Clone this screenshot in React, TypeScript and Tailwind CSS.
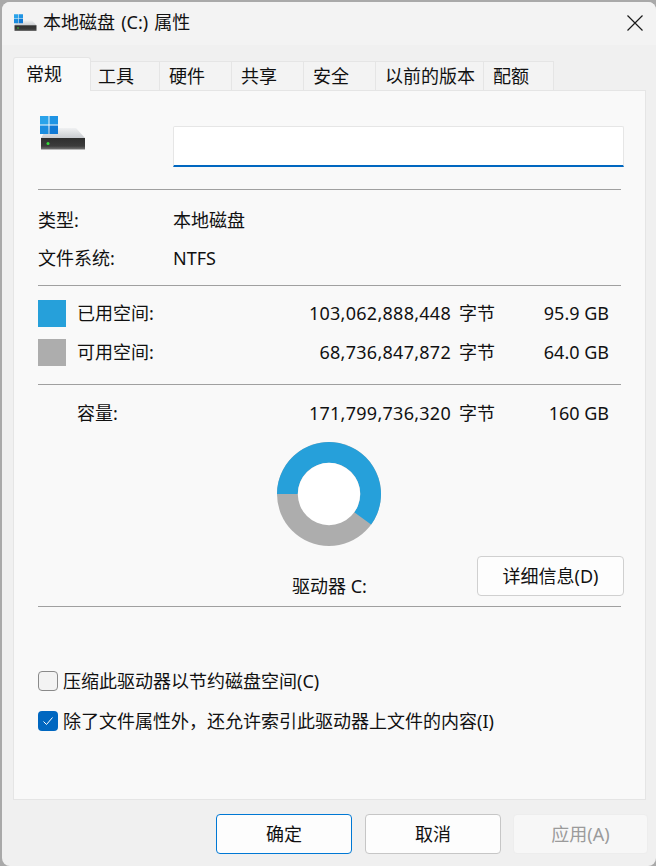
import React from 'react';

const FONT = '"Noto Sans", "Noto Sans CJK SC", sans-serif';

const DriveIcon = ({ className }: { className: string }) => (
  <svg viewBox="0 0 46 35" className={className}>
    <defs>
      <linearGradient id="driveTop" x1="0" y1="0" x2="0" y2="1">
        <stop offset="0" stopColor="#f0f1f2" />
        <stop offset="1" stopColor="#c9ccd0" />
      </linearGradient>
      <linearGradient id="driveFront" x1="0" y1="0" x2="0" y2="1">
        <stop offset="0" stopColor="#2e2e2e" />
        <stop offset="0.7" stopColor="#3c3c3c" />
        <stop offset="1" stopColor="#777777" />
      </linearGradient>
    </defs>
    <path d="M7 12h29l9 10H1z" fill="url(#driveTop)" />
    <path d="M1 22h44v11.500H1z" fill="url(#driveFront)" />
    <circle cx="8" cy="27.500" r="1.500" fill="#35e03a" />
    <rect x="0" y="0" width="8.500" height="8.500" fill="#2aa3ea" />
    <rect x="9.500" y="0" width="8.500" height="8.500" fill="#1f94e4" />
    <rect x="0" y="9.500" width="8.500" height="8.500" fill="#1b8de0" />
    <rect x="9.500" y="9.500" width="8.500" height="8.500" fill="#1078d4" />
  </svg>
);

const tabs = [
  { label: '工具', cls: 'w-[71px] -ml-[2px]' },
  { label: '硬件', cls: 'w-[72px]' },
  { label: '共享', cls: 'w-[72px]' },
  { label: '安全', cls: 'w-[72px]' },
  { label: '以前的版本', cls: 'w-[108px]' },
  { label: '配额', cls: 'w-[70px]' },
];

const Divider = ({ className }: { className: string }) => (
  <div className={`h-px shrink-0 bg-[#a0a0a0] ${className}`} />
);

const SpaceRow = ({ label, bytes, size, swatch }: { label: string; bytes: string; size: string; swatch?: string }) => (
  <div className="flex items-center h-[27px] text-[18px]">
    <div className={`w-[28px] h-[27px] ${swatch ?? ''}`} />
    <div className="ml-[11px] w-[180px]">{label}</div>
    <div className="w-[238px] text-right">
      <span className="tracking-[0.27px]">{bytes}</span>
      <span className="ml-[8px]">字节</span>
    </div>
    <div className="w-[114px] text-right">{size}</div>
  </div>
);

const DialogButton = ({ label, cls }: { label: string; cls: string }) => (
  <button className={`h-[40px] rounded-[4px] border text-[18px] ${cls}`}>{label}</button>
);

export default function App() {
  return (
    <div className="w-[656px] h-[866px] overflow-hidden bg-[#a9a9a9] pt-[2px] pl-[2px] text-[#111]" style={{ fontFamily: FONT }}>
      <div className="w-[654px] h-[864px] rounded-[8px] bg-[#f0f0f0] flex flex-col">
        <div className="h-[43px] rounded-t-[8px] bg-[#f3f3f3] flex items-center pl-[12px] pr-[13px] shrink-0">
          <DriveIcon className="w-[23px] h-[18px] -mt-[2px]" />
          <span className="ml-[6px] text-[18px] -mt-[2px] [word-spacing:1.5px]">本地磁盘 (C:) 属性</span>
          <svg viewBox="0 0 16 16" className="ml-auto -mt-[2px] w-[16px] h-[16px]" fill="none" stroke="#1a1a1a" strokeWidth="1.200">
            <path d="M.5.5l15 15M15.500.5l-15 15" />
          </svg>
        </div>

        <div className="ml-[11px] mt-[12px] flex items-end h-[34px] shrink-0 relative z-10 -mb-px">
          <div className="w-[78px] h-[34px] pl-[12px] pt-[3px] bg-[#f9f9f9] border border-b-0 border-[#e5e5e5] rounded-t-[3px] text-[18px] relative z-10">
            常规
          </div>
          {tabs.map((t) => (
            <div key={t.label} className={`${t.cls} h-[30px] pl-[9px] flex items-center bg-[#f3f3f3] border-t border-r border-b border-[#e5e5e5] text-[18px]`}>
              {t.label}
            </div>
          ))}
        </div>

        <div className="ml-[11px] w-[633px] h-[710px] bg-[#f9f9f9] border border-[#e5e5e5] px-[24px] flex flex-col shrink-0">
          <div className="flex h-[77px] items-start shrink-0">
            <DriveIcon className="ml-[2px] mt-[25px] w-[46px] h-[35px] shrink-0" />
            <div className="ml-[87px] mt-[35px] w-[451px] h-[41px] shrink-0 bg-white border border-[#e6e6e6] border-b-2 border-b-[#0067c0] rounded-t-[2px]" />
          </div>
          <Divider className="mt-[21px]" />

          <div className="mt-[17px] flex items-center h-[26px] text-[18px]">
            <div className="w-[135px]">类型:</div>
            <div>本地磁盘</div>
          </div>
          <div className="mt-[12px] flex items-center h-[26px] text-[18px]">
            <div className="w-[135px]">文件系统:</div>
            <div>NTFS</div>
          </div>
          <Divider className="mt-[14px]" />

          <div className="mt-[14px]">
            <SpaceRow label="已用空间:" bytes="103,062,888,448" size="95.9 GB" swatch="bg-[#26a0da]" />
          </div>
          <div className="mt-[12px]">
            <SpaceRow label="可用空间:" bytes="68,736,847,872" size="64.0 GB" swatch="bg-[#adadad]" />
          </div>
          <Divider className="mt-[18px]" />

          <div className="mt-[15px]">
            <SpaceRow label="容量:" bytes="171,799,736,320" size="160 GB" />
          </div>

          <svg viewBox="0 0 105 105" className="mt-[15px] ml-[239px] w-[104px] h-[104px] shrink-0">
            <circle cx="52.500" cy="52.500" r="52.500" fill="#adadad" />
            <path d="M0 52.500A52.500 52.500 0 1 1 95 83.400L78 71A31.500 31.500 0 1 0 21 52.500Z" fill="#26a0da" />
            <circle cx="52.500" cy="52.500" r="31.500" fill="#fff" />
          </svg>

          <div className="flex items-start h-[50px] mt-[10px] shrink-0">
            <span className="ml-[254px] mt-[17px] text-[18px] leading-[26px]">驱动器 C:</span>
            <button className="ml-auto -mr-[3px] w-[147px] h-[40px] rounded-[4px] bg-[#fdfdfd] border border-[#d0d0d0] text-[18px]">
              详细信息(D)
            </button>
          </div>
          <Divider className="" />

          <label className="mt-[63px] flex items-center h-[22px] text-[18px]">
            <span className="w-[20px] h-[20px] rounded-[4px] border border-[#8a8a8a] bg-[#f3f3f3]" />
            <span className="ml-[5px]">压缩此驱动器以节约磁盘空间(C)</span>
          </label>
          <label className="mt-[18px] flex items-center h-[22px] text-[18px]">
            <span className="w-[20px] h-[20px] rounded-[4px] bg-[#0067c0] flex items-center justify-center">
              <svg viewBox="0 0 12 12" className="w-[12px] h-[12px]" fill="none" stroke="#fff" strokeWidth="1">
                <path d="M1.500 6.500l3 3 6-7" />
              </svg>
            </span>
            <span className="ml-[5px]">除了文件属性外，还允许索引此驱动器上文件的内容(I)</span>
          </label>
        </div>

        <div className="mt-[14px] ml-[214px] flex">
          <DialogButton label="确定" cls="w-[136px] bg-[#fdfdfd] border-[#0078d4]" />
          <DialogButton label="取消" cls="w-[136px] ml-[13px] bg-[#fdfdfd] border-[#c6c6c6]" />
          <DialogButton label="应用(A)" cls="w-[135px] ml-[12px] bg-[#f7f7f7] border-[#ededed] text-[#9b9b9b]" />
        </div>
      </div>
    </div>
  );
}
